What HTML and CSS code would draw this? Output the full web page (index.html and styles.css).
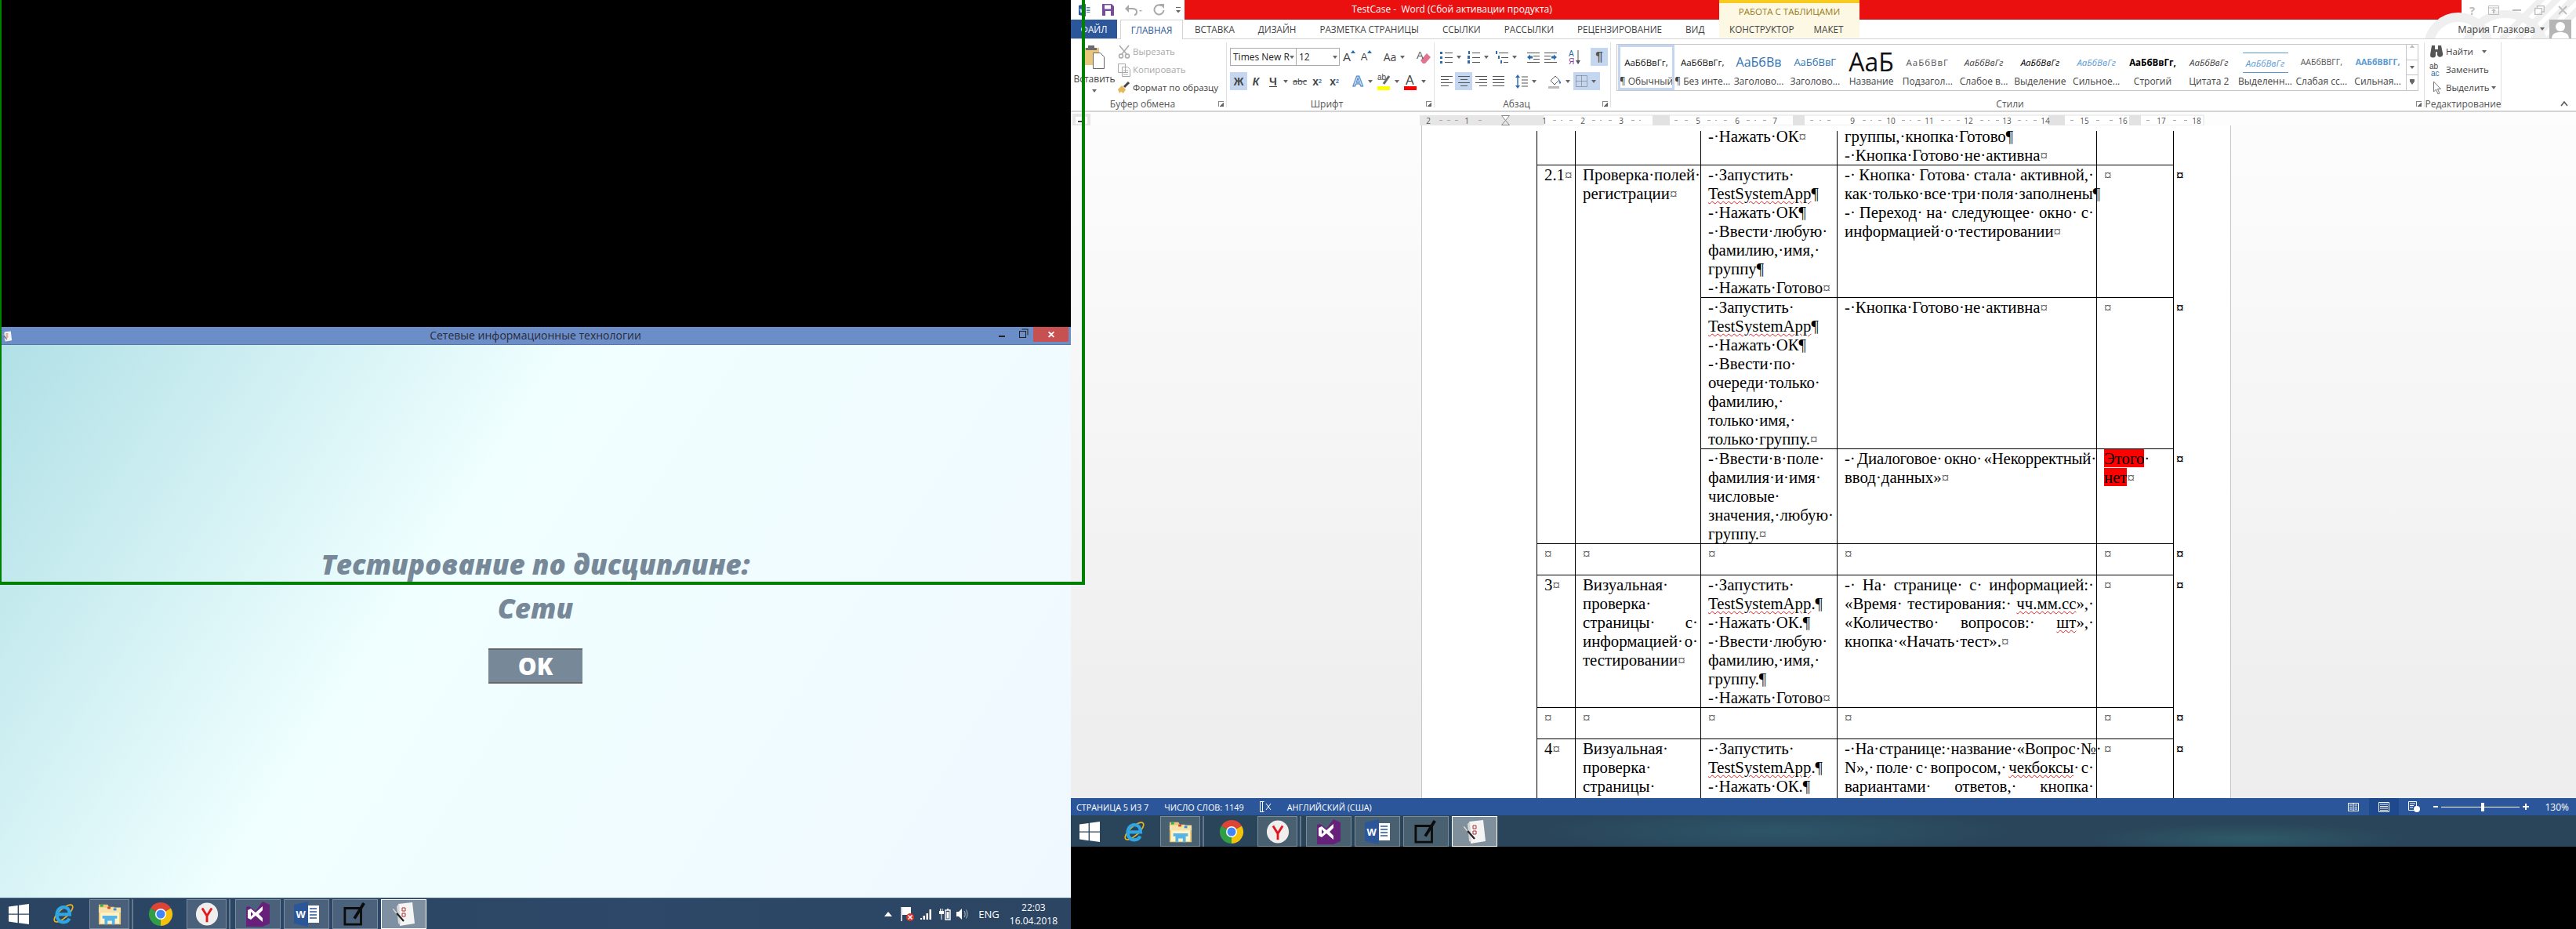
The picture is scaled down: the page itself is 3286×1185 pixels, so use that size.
FILE: index.html
```html
<!DOCTYPE html>
<html lang="ru">
<head>
  <meta charset="UTF-8">
  <title>TestCase - Word</title>
  <link rel="stylesheet" href="styles.css">
</head>
<body>
  <svg class="sprite" aria-hidden="true">
    <defs>
      <symbol id="i-win" viewBox="0 0 26 26"><path fill="#fff" d="M0 3.6 11.6 2v10.4H0zM13 1.8 26 0v12.4H13zM0 13.8h11.6v10.4L0 22.6zM13 13.8h13V26l-13-1.8z"/></symbol>
      <symbol id="i-ie" viewBox="0 0 32 32"><ellipse cx="16" cy="15" rx="16" ry="6" transform="rotate(-42 16 15)" fill="none" stroke="#f0b31c" stroke-width="1.8"/><path d="M8 16.5h16.5c0-6-3.5-10-8.5-10s-9 4.5-9 10.5 4 10 9 10c4 0 6.5-2 8-5" fill="none" stroke="#2ea6e6" stroke-width="4.5"/></symbol>
      <symbol id="i-folder" viewBox="0 0 32 32"><path fill="#e9c877" d="M1 3h12l2 3h7v4h9v20H1z"/><path fill="#f6e2a8" d="M1 7h30v7H1z"/><path fill="#fff3c9" d="M3 14h26v15H3z"/><path fill="#2fae4e" d="M3 3h4v3H3z"/><path fill="#d8402c" d="M13 6h4v3h-4z"/><path fill="#2e8fd8" d="M21 8h4v3h-4z"/><path fill="#57b4e6" d="M6 18h20v4h-3v8h-4v-5h-6v5H9v-8H6z"/></symbol>
      <symbol id="i-chrome" viewBox="0 0 32 32"><path fill="#db4437" d="M3 8.5A15 15 0 0 1 29 8.5L16 16z"/><path fill="#f4c20d" d="M29 8.5A15 15 0 0 1 16 31L16 16z"/><path fill="#2f9e44" d="M16 31A15 15 0 0 1 3 8.5L16 16z"/><circle cx="16" cy="16" r="7" fill="#fff"/><circle cx="16" cy="16" r="5.5" fill="#4285f4"/></symbol>
      <symbol id="i-yandex" viewBox="0 0 32 32"><ellipse cx="16" cy="16" rx="15" ry="15.5" fill="#f1efee"/><path d="M9.5 8 16 18.5 22.5 8M16 18.5V27" fill="none" stroke="#e3171b" stroke-width="3"/></symbol>
      <symbol id="i-vs" viewBox="0 0 30 32"><path fill="#68217a" d="M21 0l9 4v24l-9 4H0V7l4-1 4 3 4 3z"/><path fill="#fff" d="M2 11l4-2 6 5 9-8v20l-9-8-6 5-4-2z"/><path fill="#68217a" d="M21 11v10l-5-5zM6 13v6l3-3z"/></symbol>
      <symbol id="i-word" viewBox="0 0 32 32"><path fill="#fff" d="M14 5h18v22H14z"/><path stroke="#2b579a" stroke-width="1.6" d="M20 9h9M20 13h9M20 17h9M20 21h9"/><path fill="#2b579a" d="M0 4 18 0v32L0 28z"/><text x="2.5" y="21" class="svg-w">W</text></symbol>
      <symbol id="i-note" viewBox="0 0 32 32"><path fill="none" stroke="#0c0c0c" stroke-width="3" d="M2 8h22v22H2z"/><path d="M28 1 15 22" stroke="#0c0c0c" stroke-width="4"/></symbol>
      <symbol id="i-app" viewBox="0 0 32 32"><path fill="#f4f4f4" d="M9 3l18-2 3 27-19 3z"/><path fill="#d6d6d6" d="M10 3l-3 3 2 22 3 1z"/><path d="M14 8h4v4h-4zM14 15h4v4h-4z" fill="none" stroke="#a33" stroke-width="1"/><path d="M2 9l14 16" stroke="#222" stroke-width="2.2"/><path d="M2 9l5 6" stroke="#ccc" stroke-width="2.2"/></symbol>
    </defs>
  </svg>

  <div class="pane-left">
    <div class="black-top"></div>
    <div class="app-title">
      <svg class="app-icon" width="14" height="18"><use href="#i-app"/></svg>
      <span class="app-caption">Сетевые информационные технологии</span>
      <div class="app-controls">
        <span class="ctl-min"></span>
        <span class="ctl-max"></span>
        <span class="ctl-close">✕</span>
      </div>
    </div>
    <main class="app-body">
      <h1>Тестирование по дисциплине:</h1>
      <h2>Сети</h2>
      <button class="ok-btn">OK</button>
    </main>
    <div class="taskbar taskbar-left">
      <span class="start"><svg width="26" height="26"><use href="#i-win"/></svg></span>
      <span class="task plain"><svg width="30" height="30"><use href="#i-ie"/></svg></span>
      <span class="task stack"><svg width="30" height="30"><use href="#i-folder"/></svg></span>
      <span class="task plain"><svg width="32" height="32"><use href="#i-chrome"/></svg></span>
      <span class="task stack"><svg width="30" height="32"><use href="#i-yandex"/></svg></span>
      <span class="task"><svg width="30" height="32"><use href="#i-vs"/></svg></span>
      <span class="task"><svg width="32" height="32"><use href="#i-word"/></svg></span>
      <span class="task"><svg width="30" height="30"><use href="#i-note"/></svg></span>
      <span class="task active"><svg width="32" height="32"><use href="#i-app"/></svg></span>
      <div class="tray">
        <svg width="10" height="6" viewBox="0 0 10 6"><path fill="#fff" d="M0 6 5 0l5 6z"/></svg>
        <svg class="tray-flag" width="18" height="20" viewBox="0 0 18 20"><path stroke="#fff" stroke-width="1.5" d="M1 1v18"/><path fill="#fff" d="M2 1h11v10H2z"/><circle cx="12" cy="14" r="5" fill="#d9352b"/><path stroke="#fff" stroke-width="1.5" d="m9.5 11.5 5 5m0-5-5 5"/></svg>
        <svg width="16" height="14" viewBox="0 0 16 14"><path fill="#fff" d="M0 12h2v2H0zM3.5 9H6v5H3.5zM7.5 6H10v8H7.5zM11.5 1H14v13h-2.5z"/></svg>
        <svg width="16" height="16" viewBox="0 0 16 16"><path fill="none" stroke="#fff" stroke-width="1.4" d="M9 3h6v12H9z"/><path fill="#fff" d="M10.5 5h3v8.5h-3zM11 1h2v2h-2zM2 1h1v3H2zM4.5 1h1v3h-1zM1 4h6v4H4.5v7h-1V8H1z"/></svg>
        <svg width="16" height="14" viewBox="0 0 16 14"><path fill="#fff" d="M0 4h3l4-4v14l-4-4H0z"/><path fill="none" stroke="#bbb" d="M10 3c1.5 2 1.5 6 0 8M12.5 1.5c2 3 2 8 0 11"/></svg>
        <span class="tray-lang">ENG</span>
        <span class="tray-clock">22:03<br>16.04.2018</span>
      </div>
    </div>
  </div>

  <div class="pane-right">
    <div class="word">
      <div class="word-title">
        <div class="qat">
          <svg width="16" height="16"><use href="#i-word"/></svg>
          <svg width="15" height="15" viewBox="0 0 15 15"><path fill="#7a4b9c" d="M0 0h12l3 3v12H0z"/><path fill="#fff" d="M3 1.5h8v5H3zM4 9h7v6H4z"/></svg>
          <svg width="22" height="14" viewBox="0 0 22 14"><path fill="none" stroke="#a9a9a9" stroke-width="2" d="M1 5h8c4 0 6 2 6 4s-1 4-3 4"/><path fill="#a9a9a9" d="M5 0v10L0 5zM18 7h4l-2 2z"/></svg>
          <svg width="15" height="15" viewBox="0 0 15 15"><path fill="none" stroke="#a9a9a9" stroke-width="2" d="M11 2.5A6 6 0 1 0 13.5 8"/><path fill="#a9a9a9" d="M8 0h6v6z"/></svg>
          <svg width="6" height="8" viewBox="0 0 6 8"><path fill="#666" d="M0 0h6v1H0zM0 4h6L3 7.5z"/></svg>
        </div>
        <div class="title-red">TestCase -&nbsp; Word (Сбой активации продукта)</div>
        <div class="tools-tab">РАБОТА С ТАБЛИЦАМИ</div>
        <div class="title-red title-red-end"></div>
        <div class="win-btns">
          <span class="w-help">?</span>
          <svg width="14" height="12" viewBox="0 0 14 12"><path fill="none" stroke="#bdbdbd" d="M.5.5h13v11H.5zM.5 3h13"/><path fill="#bdbdbd" d="M7 4l3 3H8v3H6V7H4z"/></svg>
          <svg width="11" height="2"><rect width="11" height="2" fill="#bdbdbd"/></svg>
          <svg width="13" height="12" viewBox="0 0 13 12"><path fill="none" stroke="#bdbdbd" stroke-width="1.3" d="M.7 3.7h8.6v7.6H.7zM3.5 3.5V.7h8.8v7.5H9.5"/></svg>
          <svg width="12" height="12" viewBox="0 0 12 12"><path stroke="#bdbdbd" stroke-width="1.8" d="m1 1 10 10m0-10L1 11"/></svg>
        </div>
      </div>

      <svg class="watermark" width="200" height="50" viewBox="0 0 200 50"><g fill="none" stroke="#efefef"><circle cx="50" cy="60" r="38" stroke-width="12"/><circle cx="110" cy="70" r="52" stroke-width="10"/><path stroke-width="8" d="M105 50 160-5M125 50 180-5M145 50 200-5M165 50 220-5"/></g></svg>

      <nav class="tabs">
        <a class="tab-file">ФАЙЛ</a>
        <a class="tab-home">ГЛАВНАЯ</a>
        <a>ВСТАВКА</a>
        <a>ДИЗАЙН</a>
        <a>РАЗМЕТКА СТРАНИЦЫ</a>
        <a>ССЫЛКИ</a>
        <a>РАССЫЛКИ</a>
        <a>РЕЦЕНЗИРОВАНИЕ</a>
        <a>ВИД</a>
        <div class="tabs-ctx">
          <a>КОНСТРУКТОР</a>
          <a>МАКЕТ</a>
        </div>
        <div class="account">
          <span>Мария Глазкова</span>
          <i class="caret"></i>
          <svg width="28" height="24" viewBox="0 0 28 24"><rect width="28" height="24" fill="#b5b5b5"/><circle cx="14" cy="9" r="6" fill="#fff"/><path fill="#fff" d="M3 24c0-6 5-8 11-8s11 2 11 8z"/></svg>
        </div>
      </nav>

      <section class="ribbon">
        <div class="grp grp-clip">
          <div class="grp-body clip-body">
            <div class="paste">
              <svg width="28" height="30" viewBox="0 0 28 30"><path fill="#e8c67c" d="M0 3h20v22H0z"/><path fill="#6b6b6b" d="M6 0h8v3h3v3H3V3h3z"/><path fill="#fff" stroke="#666" d="M12.5 9.5h9l5 5v15h-14z"/></svg>
              <span>Вставить</span>
              <i class="caret"></i>
            </div>
            <div class="clip-tools">
              <div class="clip-row off"><svg width="16" height="18" viewBox="0 0 16 18"><path fill="none" stroke="#aaa" stroke-width="1.5" d="M2 1l9 11M14 1 5 12"/><circle cx="4" cy="14.5" r="2.5" fill="none" stroke="#aaa" stroke-width="1.5"/><circle cx="12" cy="14.5" r="2.5" fill="none" stroke="#aaa" stroke-width="1.5"/></svg>Вырезать</div>
              <div class="clip-row off"><svg width="16" height="18" viewBox="0 0 16 18"><path fill="#fff" stroke="#aaa" d="M.5 1.5h9v11h-9zM5.5 5.5h7l3 3v9h-10z"/><path stroke="#aaa" d="M7 10h6M7 12.5h6M7 15h6"/></svg>Копировать</div>
              <div class="clip-row"><svg width="16" height="18" viewBox="0 0 16 18"><path fill="#e5b95a" d="M0 11l5-5 5 5-3 5-3-2-2 2z"/><path stroke="#444" stroke-width="3" d="M8 8l6-6"/></svg>Формат по образцу</div>
            </div>
          </div>
          <div class="grp-label lb-clip">Буфер обмена<i class="launch"></i></div>
        </div>

        <div class="grp grp-font">
          <div class="grp-body tool-rows">
            <div class="row">
              <div class="combo combo-name">Times New R<i class="caret"></i></div>
              <div class="combo combo-size">12<i class="caret"></i></div>
              <span class="btn"><b class="grow">A</b><i class="up"></i></span>
              <span class="btn"><b class="grow small">A</b><i class="up"></i></span>
              <span class="btn btn-aa ml8">Aa</span><i class="caret c10"></i>
              <span class="btn ml11"><svg width="18" height="20" viewBox="0 0 18 20"><path fill="#e0738f" d="M5 14 13 5l5 5-7 8H8z"/><text x="0" y="12" class="svg-a">A</text></svg></span>
            </div>
            <div class="row">
              <span class="btn on fb">Ж</span>
              <span class="btn fb fi">К</span>
              <span class="btn fb fu">Ч</span><i class="caret c10"></i>
              <span class="btn ml2 fs">abc</span>
              <span class="btn fb">x<sub>2</sub></span>
              <span class="btn fb">x<sup>2</sup></span>
              <span class="btn ml8"><b class="fx-a">A</b></span><i class="caret c10"></i>
              <span class="btn ml2"><svg width="18" height="22" viewBox="0 0 18 22"><text x="0" y="9" class="svg-ab">ab</text><path d="M8 14 15 4" stroke="#666" stroke-width="3"/><rect y="17" width="16" height="5" fill="#ffff00"/></svg></span><i class="caret c10"></i>
              <span class="btn ml2"><svg width="18" height="22" viewBox="0 0 18 22"><text x="2" y="15" class="svg-color">A</text><rect y="17" width="16" height="5" fill="#ff0000"/></svg></span><i class="caret c10"></i>
            </div>
          </div>
          <div class="grp-label lb-font">Шрифт<i class="launch"></i></div>
        </div>

        <div class="grp grp-para">
          <div class="grp-body tool-rows">
            <div class="row">
              <span class="btn"><svg width="16" height="16" viewBox="0 0 16 16"><path fill="#2b6cb0" d="M0 1h3v3H0zM0 7h3v3H0zM0 13h3v3H0z"/><path stroke="#555" d="M6 2.5h10M6 8.5h10M6 14.5h10"/></svg></span><i class="caret c10"></i>
              <span class="btn ml3"><svg width="16" height="16" viewBox="0 0 16 16"><path fill="#2b6cb0" d="M1 0h2v4H1zM0 6h3v4H0zM0 12h3v4H0z"/><path stroke="#555" d="M6 2.5h10M6 8.5h10M6 14.5h10"/></svg></span><i class="caret c10"></i>
              <span class="btn ml4"><svg width="16" height="16" viewBox="0 0 16 16"><path fill="#2b6cb0" d="M0 0h2v4H0zM3 6h2v4H3zM6 12h2v4H6z"/><path stroke="#555" d="M4 2.5h12M7 8.5h9M10 14.5h6"/></svg></span><i class="caret c10"></i>
              <span class="btn ml8"><svg width="16" height="14" viewBox="0 0 16 14"><path stroke="#555" d="M0 1.5h16M8 5.5h8M8 9.5h8M0 13.5h16"/><path fill="#2b6cb0" d="M0 7l4-3.500v2h3v3H4v2z"/></svg></span>
              <span class="btn"><svg width="16" height="14" viewBox="0 0 16 14"><path stroke="#555" d="M0 1.5h16M0 5.5h8M0 9.5h8M0 13.5h16"/><path fill="#2b6cb0" d="M16 7l-4-3.500v2H9v3h3v2z"/></svg></span>
              <span class="btn ml9"><svg width="16" height="20" viewBox="0 0 16 20"><text x="0" y="9" class="svg-sort">А</text><text x="0" y="19" class="svg-sort2">Я</text><path stroke="#555" d="M12 1v17"/><path fill="#555" d="M9 14h6l-3 5z"/></svg></span>
              <span class="btn ml9 on pil">¶</span>
            </div>
            <div class="row">
              <span class="btn"><svg width="15" height="14" viewBox="0 0 15 14"><path stroke="#555" d="M0 .5h15M0 4.5h10M0 8.5h15M0 12.5h10"/></svg></span>
              <span class="btn on"><svg width="15" height="14" viewBox="0 0 15 14"><path stroke="#555" d="M0 .5h15M3 4.5h9M0 8.5h15M3 12.5h9"/></svg></span>
              <span class="btn"><svg width="15" height="14" viewBox="0 0 15 14"><path stroke="#555" d="M0 .5h15M5 4.5h10M0 8.5h15M5 12.5h10"/></svg></span>
              <span class="btn"><svg width="15" height="14" viewBox="0 0 15 14"><path stroke="#555" d="M0 .5h15M0 4.5h15M0 8.5h15M0 12.5h15"/></svg></span>
              <span class="btn ml8"><svg width="16" height="18" viewBox="0 0 16 18"><path stroke="#2b6cb0" stroke-width="1.4" d="M3 2v14"/><path fill="#2b6cb0" d="M0 4l3-4 3 4zM0 14h6l-3 4z"/><path stroke="#555" d="M8 3h8M8 7h8M8 11h8M8 15h8"/></svg></span><i class="caret c10"></i>
              <span class="btn ml11"><svg width="18" height="20" viewBox="0 0 18 20"><path fill="none" stroke="#666" d="M3 9l6-6 5 5-6 6z"/><path fill="#3f82c4" d="M14 8c2 2 3 4 1 5-2-1-1-3-1-5z"/><rect y="16" width="14" height="3" fill="#bbb"/></svg></span><i class="caret c10"></i>
              <span class="btn-wide on"><svg width="15" height="15" viewBox="0 0 15 15"><path fill="none" stroke="#666" stroke-dasharray="1 1" d="M.5.5h14v14H.5zM7.500.5v14M.5 7.5h14"/></svg><i class="caret c10"></i></span>
            </div>
          </div>
          <div class="grp-label lb-para">Абзац<i class="launch"></i></div>
        </div>

        <div class="grp grp-styles">
          <div class="grp-body styles-body">
            <div class="gallery">
              <div class="st sel"><span class="s-sample">АаБбВвГг,</span><span class="s-name">¶ Обычный</span></div>
              <div class="st"><span class="s-sample">АаБбВвГг,</span><span class="s-name">¶ Без инте...</span></div>
              <div class="st"><span class="s-sample s-h1">АаБбВв</span><span class="s-name">Заголово...</span></div>
              <div class="st"><span class="s-sample s-h2">АаБбВвГ</span><span class="s-name">Заголово...</span></div>
              <div class="st"><span class="s-sample s-title">АаБ</span><span class="s-name">Название</span></div>
              <div class="st"><span class="s-sample s-sub">АаБбВвГ</span><span class="s-name">Подзагол...</span></div>
              <div class="st"><span class="s-sample s-weak">АаБбВвГг</span><span class="s-name">Слабое в...</span></div>
              <div class="st"><span class="s-sample s-em">АаБбВвГг</span><span class="s-name">Выделение</span></div>
              <div class="st"><span class="s-sample s-strong-em">АаБбВвГг</span><span class="s-name">Сильное...</span></div>
              <div class="st"><span class="s-sample s-bold">АаБбВвГг,</span><span class="s-name">Строгий</span></div>
              <div class="st"><span class="s-sample s-quote">АаБбВвГг</span><span class="s-name">Цитата 2</span></div>
              <div class="st"><span class="s-sample s-quote-blue">АаБбВвГг</span><span class="s-name">Выделенн...</span></div>
              <div class="st"><span class="s-sample s-ref">ААБбВВГГ,</span><span class="s-name">Слабая сс...</span></div>
              <div class="st"><span class="s-sample s-ref-blue">ААБбВВГГ,</span><span class="s-name">Сильная...</span></div>
              <div class="gal-scroll">
                <span><i class="up gray"></i></span>
                <span><i class="caret"></i></span>
                <span><i class="caret bar"></i></span>
              </div>
            </div>
          </div>
          <div class="grp-label lb-styles">Стили<i class="launch"></i></div>
        </div>

        <div class="grp grp-edit">
          <div class="grp-body edit-body">
            <div class="clip-row"><svg width="18" height="18" viewBox="0 0 18 18"><path fill="#555" d="M3 1h4v5h4V1h4l2 10a3.5 3.5 0 1 1-7 2V9H8v4a3.5 3.5 0 1 1-7 0z"/></svg>Найти<i class="caret ml8"></i></div>
            <div class="clip-row"><svg width="18" height="18" viewBox="0 0 18 18"><text x="0" y="8" class="svg-ac">ab</text><text x="2" y="17" class="svg-ac blue">ac</text></svg>Заменить</div>
            <div class="clip-row"><svg width="18" height="18" viewBox="0 0 18 18"><path fill="#fff" stroke="#777" d="M5.5 1v13l3-3 2.5 6 2-1-2.500-5.500h4z"/></svg>Выделить<i class="caret"></i></div>
          </div>
          <div class="grp-label">Редактирование</div>
        </div>
        <svg class="collapse" width="10" height="8" viewBox="0 0 10 8"><path fill="none" stroke="#555" stroke-width="1.5" d="m1 7 4-5 4 5"/></svg>
      </section>

      <div class="doc">
        <svg class="ruler" width="1920" height="17" viewBox="0 0 1920 17">
          <rect x="4" y="4" width="19" height="13" fill="#fff" stroke="#e6e6e6" stroke-width="4"/>
          <path d="M9 12h6V8" fill="none" stroke="#444" stroke-width="2"/>
          <rect x="445" y="4" width="158" height="13" fill="#e6e6e6"/>
          <rect x="603" y="4" width="842" height="13" fill="#fff" stroke="#e2e2e2"/>
          <g fill="#e2e2e2">
            <rect x="742" y="4" width="22" height="13"/><rect x="921" y="4" width="15" height="13"/>
            <rect x="1247" y="4" width="21" height="13"/><rect x="1350" y="4" width="15" height="13"/>
          </g>
          <g class="ruler-nums">
            <text x="456" y="15">2</text><text x="505" y="15">1</text><text x="604" y="15">1</text>
            <text x="653" y="15">2</text><text x="702" y="15">3</text><text x="800" y="15">5</text>
            <text x="850" y="15">6</text><text x="898" y="15">7</text><text x="997" y="15">9</text>
            <text x="1046" y="15">10</text><text x="1095" y="15">11</text><text x="1145" y="15">12</text>
            <text x="1194" y="15">13</text><text x="1243" y="15">14</text><text x="1293" y="15">15</text>
            <text x="1342" y="15">16</text><text x="1391" y="15">17</text><text x="1436" y="15">18</text>
          </g>
          <path d="M470 10.5h4M480 10.5h4M490 10.5h4M520 10.5h4M615 10.5h4M625 10.5h2M636 10.5h4M665 10.5h4M675 10.5h2M686 10.5h4M715 10.5h4M725 10.5h2M770 10.5h4M783 10.5h4M812 10.5h4M822 10.5h2M833 10.5h4M862 10.5h4M872 10.5h2M883 10.5h4M943 10.5h4M955 10.5h2M965 10.5h4M1010 10.5h4M1020 10.5h2M1030 10.5h4M1060 10.5h4M1070 10.5h2M1080 10.5h4M1110 10.5h4M1120 10.5h2M1130 10.5h4M1160 10.5h4M1170 10.5h2M1180 10.5h4M1208 10.5h4M1218 10.5h2M1228 10.5h4M1275 10.5h4M1308 10.5h4M1325 10.5h4M1372 10.5h4M1406 10.5h4M1420 10.5h4" stroke="#aaa"/>
          <path d="M549.5 4.5h10l-5 6 5 6" fill="#fff" stroke="#888"/>
          <path d="M549.5 4.5l5 6-5 6h10" fill="none" stroke="#888"/>
        </svg>
        <div class="doc-scroll">
          <div class="page">
            <div class="table-clip">
              <table class="tc">
                <colgroup><col class="c1"><col class="c2"><col class="c3"><col class="c4"><col class="c5"><col class="c6"></colgroup>
                <tr>
                  <td></td>
                  <td></td>
                  <td>-·Нажать·ОК<i class="m">¤</i></td>
                  <td>группы,·кнопка·Готово¶<br>-·Кнопка·Готово·не·активна<i class="m">¤</i></td>
                  <td></td>
                  <td class="eor"></td>
                </tr>
                <tr>
                  <td rowspan="3">2.1<i class="m">¤</i></td>
                  <td rowspan="3">Проверка·полей·<br>регистрации<i class="m">¤</i></td>
                  <td>-·Запустить·<br><u>TestSystemApp</u>¶<br>-·Нажать·ОК¶<br>-·Ввести·любую·<br>фамилию,·имя,·<br>группу¶<br>-·Нажать·Готово<i class="m">¤</i></td>
                  <td><span class="j">-· Кнопка· Готова· стала· активной,·</span>как·только·все·три·поля·заполнены¶<br><span class="j">-· Переход· на· следующее· окно· с·</span>информацией·о·тестировании<i class="m">¤</i></td>
                  <td><i class="m">¤</i></td>
                  <td class="eor"><b>¤</b></td>
                </tr>
                <tr>
                  <td>-·Запустить·<br><u>TestSystemApp</u>¶<br>-·Нажать·ОК¶<br>-·Ввести·по·<br>очереди·только·<br>фамилию,·<br>только·имя,·<br>только·группу.<i class="m">¤</i></td>
                  <td>-·Кнопка·Готово·не·активна<i class="m">¤</i></td>
                  <td><i class="m">¤</i></td>
                  <td class="eor"><b>¤</b></td>
                </tr>
                <tr>
                  <td>-·Ввести·в·поле·<br>фамилия·и·имя·<br>числовые·<br>значения,·любую·<br>группу.<i class="m">¤</i></td>
                  <td><span class="j tight">-· Диалоговое· окно· «Некорректный·</span>ввод·данных»<i class="m">¤</i></td>
                  <td><mark>Этого</mark>·<br><mark>нет</mark><i class="m">¤</i></td>
                  <td class="eor"><b>¤</b></td>
                </tr>
                <tr class="blank">
                  <td><i class="m">¤</i></td><td><i class="m">¤</i></td><td><i class="m">¤</i></td><td><i class="m">¤</i></td><td><i class="m">¤</i></td><td class="eor"><b>¤</b></td>
                </tr>
                <tr>
                  <td>3<i class="m">¤</i></td>
                  <td>Визуальная·<br>проверка·<br><span class="j">страницы· с·</span><span class="j">информацией· о·</span>тестировании<i class="m">¤</i></td>
                  <td>-·Запустить·<br><u>TestSystemApp</u>.¶<br>-·Нажать·ОК.¶<br>-·Ввести·любую·<br>фамилию,·имя,·<br>группу.¶<br>-·Нажать·Готово<i class="m">¤</i></td>
                  <td><span class="j">-· На· странице· с· информацией:·</span><span class="j">«Время· тестирования:· <u>чч.мм.сс</u>»,·</span><span class="j">«Количество· вопросов:· <u>шт</u>»,·</span>кнопка·«Начать·тест».<i class="m">¤</i></td>
                  <td><i class="m">¤</i></td>
                  <td class="eor"><b>¤</b></td>
                </tr>
                <tr class="blank">
                  <td><i class="m">¤</i></td><td><i class="m">¤</i></td><td><i class="m">¤</i></td><td><i class="m">¤</i></td><td><i class="m">¤</i></td><td class="eor"><b>¤</b></td>
                </tr>
                <tr>
                  <td>4<i class="m">¤</i></td>
                  <td>Визуальная·<br>проверка·<br>страницы·<br>с·информацией</td>
                  <td>-·Запустить·<br><u>TestSystemApp</u>.¶<br>-·Нажать·ОК.¶<br>-·Ввести·любую·</td>
                  <td><span class="j tight">-·На·странице:·название·«Вопрос·№·</span><span class="j">N»,· поле· с· вопросом,· <u>чекбоксы</u>· с·</span><span class="j">вариантами· ответов,· кнопка·</span>«Выбрать»</td>
                  <td><i class="m">¤</i></td>
                  <td class="eor"><b>¤</b></td>
                </tr>
              </table>
            </div>
          </div>
        </div>
      </div>

      <footer class="status">
        <span>СТРАНИЦА 5 ИЗ 7</span>
        <span>ЧИСЛО СЛОВ: 1149</span>
        <svg width="15" height="16" viewBox="0 0 15 16"><path fill="none" stroke="#fff" d="M.5 1.5h3v13h-3zM.5 1.5h5M.5 14.5h5"/><path stroke="#fff" d="m8 4 6 8m0-8-6 8"/></svg>
        <span>АНГЛИЙСКИЙ (США)</span>
        <div class="status-right">
          <svg width="14" height="13" viewBox="0 0 14 13"><path fill="none" stroke="#fff" d="M.5 1.5h13v10H.5zM7 1.5v10M2 4h3.5M2 6.5h3.5M2 9h3.5M8.5 4H12M8.5 6.5H12M8.5 9H12"/></svg>
          <span class="view-on"><svg width="14" height="13" viewBox="0 0 14 13"><path fill="none" stroke="#fff" d="M.5.5h13v12H.5zM2 3h10M2 5.5h10M2 8h10M2 10.5h10"/></svg></span>
          <svg width="15" height="14" viewBox="0 0 15 14"><path fill="none" stroke="#fff" d="M.5.5h10v11H.5zM2 3h7M2 5.5h5M2 8h4"/><circle cx="11" cy="10" r="4" fill="#fff"/></svg>
          <span class="zoom-minus"></span>
          <div class="slider"><span class="thumb"></span></div>
          <span class="zoom-plus"></span>
          <span class="zoom-val">130%</span>
        </div>
      </footer>
    </div>

    <div class="taskbar taskbar-right">
      <span class="start"><svg width="26" height="26"><use href="#i-win"/></svg></span>
      <span class="task plain"><svg width="30" height="30"><use href="#i-ie"/></svg></span>
      <span class="task stack"><svg width="30" height="30"><use href="#i-folder"/></svg></span>
      <span class="task plain"><svg width="32" height="32"><use href="#i-chrome"/></svg></span>
      <span class="task stack"><svg width="30" height="32"><use href="#i-yandex"/></svg></span>
      <span class="task"><svg width="30" height="32"><use href="#i-vs"/></svg></span>
      <span class="task"><svg width="32" height="32"><use href="#i-word"/></svg></span>
      <span class="task"><svg width="30" height="30"><use href="#i-note"/></svg></span>
      <span class="task active"><svg width="32" height="32"><use href="#i-app"/></svg></span>
    </div>
  </div>

  <div class="green-frame"></div>
</body>
</html>
```

FILE: styles.css
```css
* {
  box-sizing: border-box;
  margin: 0;
  padding: 0;
}

body {
  position: relative;
  width: 3286px;
  height: 1185px;
  display: flex;
  overflow: hidden;
  background: #000;
  font-family: "Open Sans", sans-serif;
  font-size: 12px;
  color: #444;
}

.sprite {
  display: block;
  width: 0;
  height: 0;
}

.svg-w { font: 700 13px "Liberation Sans", sans-serif; fill: #fff; }

.green-frame {
  position: absolute;
  top: 0;
  left: 0;
  width: 1384px;
  height: 746px;
  border-left: 2px solid #008000;
  border-right: 4px solid #008000;
  border-bottom: 4px solid #008000;
  pointer-events: none;
}

/* left: test app */
.pane-left {
  width: 1366px;
  display: flex;
  flex-direction: column;
}

.black-top {
  height: 417px;
  background: #000;
}

.app-title {
  height: 23px;
  display: grid;
  grid-template-columns: 1fr auto 1fr;
  align-items: start;
  background: #6b8ec8;
  border-bottom: 1px solid #56779f;
  color: #2a2a3a;
}

.app-icon {
  margin: 3px 0 0 2px;
}

.app-caption {
  font-size: 14px;
  line-height: 22px;
}

.app-controls {
  display: flex;
  justify-content: flex-end;
  align-items: flex-start;
}

.ctl-min {
  width: 8px;
  height: 2px;
  margin: 11px 18px 0 0;
  background: #222;
}

.ctl-max {
  width: 9px;
  height: 9px;
  margin: 5px 9px 0 0;
  border: 1.5px solid #222;
  box-shadow: 2px -2px 0 -0.5px #6b8ec8, 3px -3px 0 -0.5px #222;
}

.ctl-close {
  width: 45px;
  height: 19px;
  margin-right: 3px;
  background: #c75050;
  color: #fff;
  font-size: 12px;
  font-weight: 700;
  line-height: 19px;
  text-align: center;
}

.app-body {
  flex: 1;
  display: flex;
  flex-direction: column;
  align-items: center;
  padding-top: 252px;
  background: linear-gradient(123deg, #b0e0e6 0%, #f0ffff 40%, #f0f8ff 100%);
  color: #778899;
}

.app-body h1,
.app-body h2 {
  font-size: 35px;
  font-style: italic;
  font-weight: 800;
  line-height: 56px;
}

.ok-btn {
  width: 120px;
  height: 45px;
  margin-top: 23px;
  background: #778899;
  border: 0;
  border-top: 2px solid #666;
  border-bottom: 2px solid #666;
  color: #fff;
  font-family: "Open Sans", sans-serif;
  font-size: 30px;
  font-weight: 800;
  line-height: 38px;
}

/* taskbars */
.taskbar {
  height: 40px;
  display: flex;
  align-items: stretch;
  gap: 4px;
  padding-top: 1px;
}

.taskbar-left {
  background: linear-gradient(90deg, #2a4462, #2d4868 60%, #2b4562);
  border-top: 1px solid #4b6480;
}

.taskbar-right {
  background:
    radial-gradient(ellipse 300px 30px at 900px 20px, #2d5568, transparent),
    radial-gradient(ellipse 200px 20px at 1500px 30px, #2e5a68, transparent),
    #2a4559;
}

.start {
  width: 48px;
  display: flex;
  align-items: center;
  justify-content: center;
}

.task {
  width: 58px;
  display: flex;
  align-items: center;
  justify-content: center;
  background: rgba(255, 255, 255, .15);
  border: 1px solid rgba(255, 255, 255, .28);
}

.task.plain {
  background: none;
  border-color: transparent;
}

.task.stack {
  width: 51px;
  margin-right: 7px;
  box-shadow: 3px 0 0 #2b4562, 5px 0 0 rgba(255, 255, 255, .28);
}

.task.active {
  background: rgba(255, 255, 255, .4);
  border: 1px solid #fff;
}

.tray {
  margin-left: auto;
  display: flex;
  align-items: center;
  gap: 7px;
  padding-right: 17px;
  color: #fff;
}

.tray-flag {
  margin-left: 4px;
}

.tray-lang {
  margin-left: 5px;
  font-size: 13px;
}

.tray-clock {
  margin-left: 6px;
  font-size: 12px;
  line-height: 17px;
  text-align: center;
}

/* right: word */
.pane-right {
  flex: 1;
  min-width: 0;
  display: flex;
  flex-direction: column;
}

.word {
  position: relative;
  height: 1040px;
  display: flex;
  flex-direction: column;
  background: #fff;
}

.word-title {
  height: 25px;
  display: flex;
}

.qat {
  width: 145px;
  display: flex;
  align-items: center;
  gap: 14px;
  padding-left: 10px;
}

.title-red {
  width: 682px;
  background: #ea1010;
  color: #fff;
  font-size: 12px;
  line-height: 24px;
  text-align: center;
  border-bottom: 1px solid #c80c0c;
}

.title-red-end {
  width: 768px;
}

.tools-tab {
  width: 179px;
  background: #fdf8e3;
  border-top: 4px solid #f6cb1e;
  color: #9a7b1c;
  font-size: 11.5px;
  line-height: 21px;
  text-align: center;
}

.win-btns {
  flex: 1;
  position: relative;
  z-index: 1;
  display: flex;
  align-items: center;
  gap: 17px;
  padding: 0 9px 0 10px;
}

.w-help {
  font-size: 15px;
  font-weight: 700;
  color: #bdbdbd;
}

.watermark {
  position: absolute;
  top: 0;
  right: 0;
}

.tabs {
  position: relative;
  height: 25px;
  display: flex;
  align-items: stretch;
  border-bottom: 1px solid #d4d4d4;
  font-size: 11.7px;
}

.tabs a {
  padding: 0 15px;
  line-height: 24px;
  white-space: nowrap;
}

.tabs .tab-file {
  width: 59px;
  padding: 0;
  background: #2b579a;
  color: #fff;
  text-align: center;
}

.tabs .tab-home {
  margin-left: 4px;
  width: 80px;
  padding: 0;
  height: 25px;
  background: #fff;
  border: 1px solid #d4d4d4;
  border-bottom: 0;
  color: #2b579a;
  text-align: center;
}

.tabs-ctx {
  position: absolute;
  left: 827px;
  width: 179px;
  height: 23px;
  display: flex;
  background: #fdf8e3;
}

.tabs-ctx a {
  padding: 0 12px 0 13px;
}

.account {
  margin-left: auto;
  display: flex;
  align-items: center;
  gap: 6px;
  padding-right: 6px;
}

.account span {
  font-size: 12.5px;
}

.caret {
  display: inline-block;
  width: 0;
  height: 0;
  border-left: 3px solid transparent;
  border-right: 3px solid transparent;
  border-top: 4px solid #666;
}

.caret.bar {
  box-shadow: 0 -3px 0 0 #666;
}

.c10 {
  align-self: center;
  margin: 0 2px;
}

.up {
  display: inline-block;
  width: 0;
  height: 0;
  border-left: 3px solid transparent;
  border-right: 3px solid transparent;
  border-bottom: 4px solid #2b6cb0;
  align-self: flex-start;
  margin-top: 3px;
}

.up.gray {
  border-bottom-color: #bbb;
  margin: 0;
}

.ml2 { margin-left: 2px; }
.ml3 { margin-left: 3px; }
.ml4 { margin-left: 4px; }
.ml8 { margin-left: 8px; }
.ml9 { margin-left: 9px; }
.ml11 { margin-left: 11px; }

/* ribbon */
.ribbon {
  position: relative;
  height: 93px;
  display: flex;
  border-bottom: 2px solid #d4d4d4;
}

.grp {
  display: flex;
  flex-direction: column;
  position: relative;
}

.grp::after {
  content: "";
  position: absolute;
  top: 4px;
  bottom: 4px;
  right: 0;
  width: 1px;
  background: #e1e1e1;
}

.grp-body {
  height: 75px;
}

.grp-label {
  position: relative;
  height: 16px;
  line-height: 16px;
  text-align: center;
  color: #555;
}

.lb-clip { padding-right: 16px; }
.lb-font { padding-right: 10px; }
.lb-para { padding-right: 16px; }
.lb-styles { padding-right: 20px; }

.launch {
  position: absolute;
  right: 4px;
  top: 4px;
  width: 7px;
  height: 7px;
  border-left: 1px solid #888;
  border-top: 1px solid #888;
  background: linear-gradient(135deg, transparent 55%, #666 55%);
}

.grp-clip { width: 199px; }
.grp-font { width: 265px; }
.grp-para { width: 225px; }
.grp-styles { width: 1038px; }
.grp-edit { width: 98px; }

.clip-body {
  display: flex;
  padding-top: 4px;
}

.paste {
  width: 60px;
  display: flex;
  flex-direction: column;
  align-items: center;
  padding-top: 4px;
}

.paste span {
  margin-top: 5px;
  line-height: 16px;
}

.paste .caret {
  margin-top: 5px;
}

.clip-row {
  height: 23px;
  display: flex;
  align-items: center;
  gap: 3px;
  font-size: 11.5px;
  white-space: nowrap;
}

.clip-row.off {
  color: #aaa;
}

.tool-rows {
  display: flex;
  flex-direction: column;
  gap: 8px;
  padding: 11px 0 0 4px;
}

.row {
  height: 23px;
  display: flex;
  align-items: stretch;
}

.combo {
  position: relative;
  display: flex;
  align-items: center;
  padding-left: 3px;
  border: 1px solid #ababab;
  color: #222;
  white-space: nowrap;
  overflow: hidden;
}

.combo .caret {
  position: absolute;
  right: 2px;
  top: 9px;
}

.combo-name { width: 85px; font-size: 12px; }
.combo-size { width: 55px; border-left: 0; margin-right: 1px; }

.btn {
  width: 22px;
  height: 23px;
  display: flex;
  align-items: center;
  justify-content: center;
  color: #444;
}

.btn.on,
.btn-wide.on {
  background: #c5d7f0;
}

.btn-wide {
  width: 34px;
  display: flex;
  align-items: center;
  justify-content: center;
  gap: 3px;
  margin-left: 2px;
}

.grow {
  font: 400 15px "Liberation Sans", sans-serif;
}

.grow.small {
  font-size: 13px;
}

.btn-aa {
  font-size: 14px;
}

.fb {
  font: 700 14px "Liberation Sans", sans-serif;
}

.fb sub,
.fb sup {
  font-size: 7px;
  color: #2b6cb0;
}

.fi {
  font-style: italic;
}

.fu {
  text-decoration: underline;
}

.fs {
  font-size: 11px;
  text-decoration: line-through;
}

.fx-a {
  font: 700 19px "Liberation Sans", sans-serif;
  color: #d5e6f7;
  -webkit-text-stroke: 1px #3f82c4;
}

.pil {
  font: 700 17px "Liberation Sans", sans-serif;
  color: #555;
}

.svg-a { font: 400 13px "Liberation Sans", sans-serif; fill: #555; }
.svg-ab { font: 400 10px "Liberation Sans", sans-serif; fill: #444; }
.svg-color { font: 400 16px "Liberation Sans", sans-serif; fill: #444; }
.svg-sort { font: 400 10px "Liberation Sans", sans-serif; fill: #2b6cb0; }
.svg-sort2 { font: 400 10px "Liberation Sans", sans-serif; fill: #8a3fa0; }
.svg-ac { font: 400 10px "Liberation Sans", sans-serif; fill: #444; }
.svg-ac.blue { fill: #2b6cb0; }

/* style gallery */
.styles-body {
  padding: 6px 0 0 7px;
}

.gallery {
  width: 1023px;
  height: 60px;
  display: flex;
  border: 1px solid #c6c6c6;
  padding-left: 1px;
}

.st {
  width: 72px;
  height: 58px;
  display: flex;
  flex-direction: column;
  align-items: center;
  overflow: hidden;
}

.st.sel {
  border: 3px solid #c5d7f0;
}

.s-sample {
  flex: none;
  height: 40px;
  padding-top: 4px;
  display: flex;
  align-items: center;
  justify-content: center;
  width: 100%;
  overflow: hidden;
  white-space: nowrap;
  font-size: 11.5px;
  color: #111;
}

.sel .s-sample {
  height: 37px;
  padding-top: 1px;
}

.s-name {
  margin-top: -1px;
  line-height: 16px;
  color: #444;
  white-space: nowrap;
}

.s-h1 { font-size: 16px; color: #2e74b5; }
.s-h2 { font-size: 13px; color: #2e74b5; }
.s-title { font-size: 32px; line-height: 1; color: #111; }
.s-sub { color: #555; letter-spacing: 1px; }
.s-weak { font-style: italic; color: #404040; }
.s-em { font-style: italic; color: #000; }
.s-strong-em { font-style: italic; color: #5b9bd5; }
.s-bold { font-weight: 700; color: #000; }
.s-quote { font-style: italic; color: #404040; }
.s-quote-blue {
  height: 26px;
  padding-top: 0;
  margin: 10px 0 4px;
  width: 58px;
  font-style: italic;
  color: #5b9bd5;
  border-top: 1px solid #5b9bd5;
  border-bottom: 1px solid #5b9bd5;
}
.s-ref { font-size: 10.5px; color: #555; }
.s-ref-blue { font-size: 10.5px; font-weight: 700; color: #5b9bd5; }

.gal-scroll {
  width: 15px;
  margin-left: auto;
  display: flex;
  flex-direction: column;
  border-left: 1px solid #c6c6c6;
}

.gal-scroll span {
  flex: 1;
  display: flex;
  align-items: center;
  justify-content: center;
  border-bottom: 1px solid #c6c6c6;
}

.gal-scroll span:last-child {
  border-bottom: 0;
}

.edit-body {
  padding: 4px 0 0 6px;
}

.collapse {
  position: absolute;
  right: 10px;
  bottom: 5px;
}

/* document */
.doc {
  flex: 1;
  min-height: 0;
  display: flex;
  flex-direction: column;
  background: linear-gradient(#fdfdfd, #eee 90%);
}

.ruler {
  display: block;
  flex: none;
}

.ruler-nums {
  font: 400 10px "Open Sans", sans-serif;
  fill: #555;
  text-anchor: middle;
}

.doc-scroll {
  flex: 1;
  min-height: 0;
  display: flex;
  overflow: hidden;
  padding-left: 447px;
}

.page {
  width: 1033px;
  padding: 7px 0 0 146px;
  background: #fff;
  border-left: 1px solid #c6c6c6;
  border-right: 1px solid #c6c6c6;
}

.table-clip {
  height: 100%;
  overflow: hidden;
}

.tc {
  width: 832px;
  margin-top: -5px;
  table-layout: fixed;
  border-collapse: collapse;
  font-family: "Liberation Serif", serif;
  font-size: 20.8px;
  line-height: 24px;
  color: #000;
  word-spacing: -0.25em;
}

.c1 { width: 49px; }
.c2 { width: 160px; }
.c3 { width: 174px; }
.c4 { width: 331px; }
.c5 { width: 98px; }
.c6 { width: 20px; }

.tc td {
  border: 1px solid #000;
  padding: 0 3px 0 9px;
  vertical-align: top;
}

.tc td.eor {
  border: 0;
  border-left: 1px solid #000;
  padding: 0 0 0 3px;
}

.tc tr:first-child td {
  border-top: 0;
}

.blank td {
  height: 40px;
}

.j {
  display: block;
  text-align: justify;
  text-align-last: justify;
}

.j.tight {
  letter-spacing: -0.2px;
  margin-right: -3px;
  white-space: nowrap;
}

.m {
  font-style: normal;
  font-size: 19px;
  line-height: 0;
  color: #555;
}

.eor b {
  font-size: 19px;
  line-height: 0;
}

.tc u {
  text-decoration: underline wavy #e02020 1px;
  text-underline-offset: 2px;
}

.tc mark {
  background: #ff0000;
  color: #000;
}

/* status bar */
.status {
  height: 22px;
  flex: none;
  position: relative;
  display: flex;
  align-items: center;
  gap: 20px;
  padding-left: 7px;
  background: #2b579a;
  color: #fff;
  font-size: 10.8px;
}

.status-right {
  margin-left: auto;
  display: flex;
  align-items: center;
  height: 100%;
  padding-right: 9px;
}

.view-on {
  width: 38px;
  height: 100%;
  margin: 0 12px 0 13px;
  display: flex;
  align-items: center;
  justify-content: center;
  background: #1e4a8d;
}

.zoom-minus {
  width: 6px;
  height: 2px;
  margin: 0 4px 0 17px;
  background: #fff;
}

.slider {
  position: relative;
  width: 100px;
  height: 1px;
  background: #fff;
}

.thumb {
  position: absolute;
  left: 51px;
  top: -5px;
  width: 4px;
  height: 11px;
  background: #fff;
}

.zoom-plus {
  position: relative;
  width: 8px;
  height: 2px;
  margin: 0 20px 0 4px;
  background: #fff;
}

.zoom-plus::after {
  content: "";
  position: absolute;
  left: 3px;
  top: -3px;
  width: 2px;
  height: 8px;
  background: #fff;
}

.zoom-val {
  font-size: 12px;
}
```
